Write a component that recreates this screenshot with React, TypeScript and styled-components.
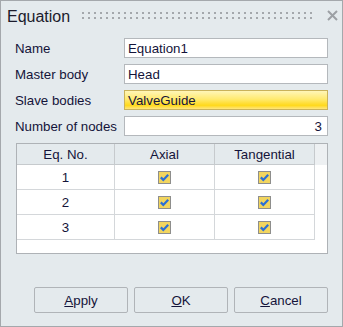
import { Fragment } from "react";
import styled, { createGlobalStyle } from "styled-components";

const GlobalStyle = createGlobalStyle`
  html, body {
    margin: 0;
    padding: 0;
    background: #e4eaed;
  }
  * {
    box-sizing: border-box;
  }
`;

const Window = styled.div`
  width: 343px;
  height: 327px;
  border: 1px solid #a4a8ac;
  background: #e4eaed;
  display: flex;
  flex-direction: column;
  font-family: "Liberation Sans", Arial, sans-serif;
  font-size: 13.3px;
  color: #14143a;
`;

const TitleBar = styled.div`
  height: 29px;
  display: flex;
  align-items: center;
  padding: 0 4px 0 6px;
  gap: 12px;
`;

const Title = styled.div`
  font-size: 16px;
  color: #1c1c2c;
  padding-top: 2px;
`;

const Grip = styled.svg`
  flex: 1;
  height: 8px;
`;

const CloseButton = styled.svg`
  width: 11px;
  height: 11px;
  flex-shrink: 0;
`;

const Form = styled.div`
  display: grid;
  grid-template-columns: 109px 1fr;
  row-gap: 6px;
  padding: 8px 14px 0 14px;
  align-items: center;
`;

const Label = styled.div`
  padding-top: 1px;
`;

const Field = styled.div<{ $highlight?: boolean; $right?: boolean }>`
  height: 20px;
  border: 1px solid #b4b8bc;
  background: ${(p) =>
    p.$highlight
      ? "linear-gradient(to bottom, #fff6b8 0%, #ffea70 45%, #ffd91c 80%, #ffe680 100%)"
      : "#ffffff"};
  border-color: ${(p) => (p.$highlight ? "#c9b25a" : "#b4b8bc")};
  display: flex;
  align-items: center;
  justify-content: ${(p) => (p.$right ? "flex-end" : "flex-start")};
  padding: 1px 5px 0 3px;
  color: #14143a;
`;

const Table = styled.div`
  margin: 7px 14px 0 15px;
  height: 111px;
  border: 1px solid #aeb2b6;
  background: #ffffff;
  display: grid;
  grid-template-columns: 98px 100px 100px 1fr;
  grid-template-rows: 21px 25px 25px 25px;
  align-content: start;
`;

const HeadCell = styled.div`
  background: #e4eaed;
  border-right: 1px solid #c6cacd;
  border-bottom: 1px solid #c6cacd;
  display: flex;
  align-items: center;
  justify-content: center;
  padding-top: 1px;
`;

const HeadFiller = styled.div`
  background: #edf0f2;
`;

const Cell = styled.div`
  border-right: 1px solid #d4d7da;
  border-bottom: 1px solid #d4d7da;
  display: flex;
  align-items: center;
  justify-content: center;
`;

const Filler = styled.div``;

const Spacer = styled.div`
  flex: 1;
`;

const Buttons = styled.div`
  display: flex;
  justify-content: flex-end;
  gap: 6px;
  padding: 0 14px 13px 0;
`;

const Button = styled.button`
  width: 94px;
  height: 26px;
  border: 1px solid #b0b4b8;
  border-radius: 2px;
  background: #e4eaed;
  font-family: "Liberation Sans", Arial, sans-serif;
  font-size: 13.3px;
  color: #14143a;
  padding: 0;
  u {
    text-decoration: underline;
  }
`;

const Check = () => (
  <svg width="13" height="13" viewBox="0 0 13 13">
    <rect x="0.5" y="0.5" width="12" height="12" fill="#f2d55e" stroke="#8e8e8c" />
    <path d="M2.8 6.4 L5.3 8.9 L10.2 3.8" fill="none" stroke="#2a6fd6" strokeWidth="2.2" />
  </svg>
);

const rows = [1, 2, 3];

export default function App() {
  return (
    <>
      <GlobalStyle />
      <Window>
        <TitleBar>
          <Title>Equation</Title>
          <Grip>
            <defs>
              <pattern id="dots" width="6" height="5" patternUnits="userSpaceOnUse">
                <rect x="0" y="0" width="2" height="2" fill="#a4a8ac" />
              </pattern>
            </defs>
            <rect x="0" y="0" width="238" height="7" fill="url(#dots)" />
          </Grip>
          <CloseButton viewBox="0 0 11 11">
            <path d="M1 1 L10 10 M10 1 L1 10" stroke="#9ca0a4" strokeWidth="2" />
          </CloseButton>
        </TitleBar>
        <Form>
          <Label>Name</Label>
          <Field>Equation1</Field>
          <Label>Master body</Label>
          <Field>Head</Field>
          <Label>Slave bodies</Label>
          <Field $highlight>ValveGuide</Field>
          <Label>Number of nodes</Label>
          <Field $right>3</Field>
        </Form>
        <Table>
          <HeadCell>Eq. No.</HeadCell>
          <HeadCell>Axial</HeadCell>
          <HeadCell>Tangential</HeadCell>
          <HeadFiller />
          {rows.map((n) => (
            <Fragment key={n}>
              <Cell>{n}</Cell>
              <Cell>
                <Check />
              </Cell>
              <Cell>
                <Check />
              </Cell>
              <Filler />
            </Fragment>
          ))}
        </Table>
        <Spacer />
        <Buttons>
          <Button>
            <u>A</u>pply
          </Button>
          <Button>
            <u>O</u>K
          </Button>
          <Button>
            <u>C</u>ancel
          </Button>
        </Buttons>
      </Window>
    </>
  );
}
